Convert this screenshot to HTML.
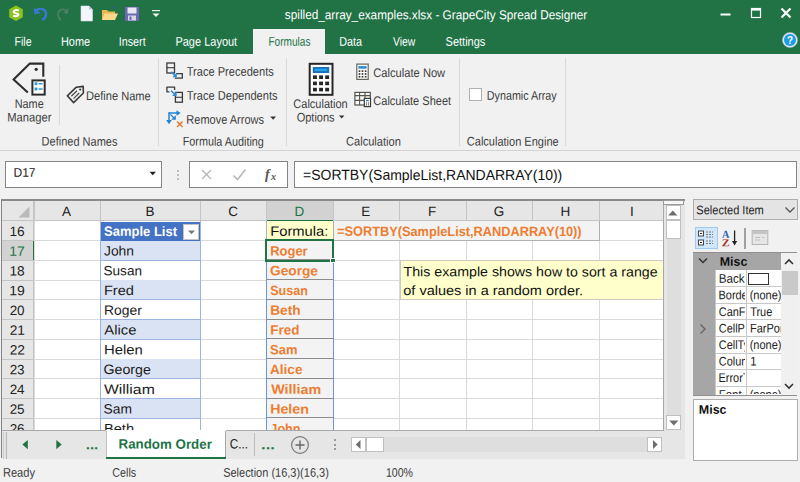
<!DOCTYPE html>
<html lang="en"><head><meta charset="utf-8"><title>GrapeCity Spread Designer</title>
<style>
html,body{margin:0;padding:0;}
body{width:800px;height:482px;overflow:hidden;position:relative;background:#f1f1f1;font-family:"Liberation Sans", sans-serif;}
#app{position:absolute;left:0;top:0;width:800px;height:482px;overflow:hidden;}
#app div,#app svg,#app span.t{position:absolute;}
#app div.c{overflow:hidden;}
span.t{left:0;top:0;white-space:pre;transform-origin:0 0;}
</style></head><body><div id="app">
<div style="left:0px;top:0px;width:800px;height:53.5px;background:#217346;"></div>
<div style="left:0px;top:0px;width:46px;height:54.3px;background:#217346;"></div>
<span class="t" style="font-size:13px;line-height:13px;color:#ffffff;transform:translate(284.85px,8.10px) rotate(0.05deg) scaleX(0.9060);">spilled_array_examples.xlsx - GrapeCity Spread Designer</span>
<svg style="left:715px;top:4px" width="80" height="20" viewBox="0 0 80 20">
<rect x="5.5" y="9.5" width="10" height="2" fill="#fff"/>
<rect x="36.5" y="4.5" width="9" height="9" fill="none" stroke="#fff" stroke-width="1.2"/>
<rect x="36" y="4" width="10" height="2.6" fill="#fff"/>
<path d="M66.5 4.5 L75.5 13.5 M75.5 4.5 L66.5 13.5" stroke="#fff" stroke-width="2.2" fill="none"/>
</svg>
<svg style="left:781px;top:31px" width="18" height="18" viewBox="0 0 18 18">
<circle cx="9" cy="9" r="7.6" fill="#dfe9f2" stroke="#9bb4c8" stroke-width="0.6"/>
<circle cx="9" cy="9" r="6" fill="#1e9be3"/>
<text x="9" y="12.6" font-size="10" font-weight="700" text-anchor="middle" fill="#fff" font-family="Liberation Sans, sans-serif">?</text>
</svg>
<svg style="left:7px;top:4px" width="160" height="20" viewBox="0 0 160 20">
<path d="M9 1.5 L15.8 5.3 L15.8 13.2 L9 17 L2.2 13.2 L2.2 5.3 Z" fill="#8cc21f"/>
<path d="M11.8 6.6 C10 5.6 6.6 6 6.6 8 C6.6 9.6 11.4 8.8 11.4 10.6 C11.4 12.4 7.6 12.6 6.2 11.6" fill="none" stroke="#fff" stroke-width="2"/>
<path d="M28 7 C33 3 39 5 39 10 C39 13 37 15 35 16" fill="none" stroke="#3a78d8" stroke-width="2.4"/>
<path d="M27 4 L27.5 10.5 L33.5 9 Z" fill="#3a78d8"/>
<path d="M60 7 C56 3.5 51 6 51 10 C51 13 52.5 15 54 16" fill="none" stroke="#4f7f68" stroke-width="1.6"/>
<path d="M61.5 4 L61 10 L56 8.5 Z" fill="#4f7f68"/>
<path d="M74 2 L82 2 L85.5 5.5 L85.5 17 L74 17 Z" fill="#f4f6fb" stroke="#d5dbea" stroke-width="0.6"/>
<path d="M82 2 L82 5.5 L85.5 5.5 Z" fill="#b9c4dc"/>
<path d="M95 6 L100 6 L101.5 7.5 L108 7.5 L108 16 L95 16 Z" fill="#e9b84f"/>
<path d="M95 16 L97.5 9.5 L111 9.5 L108 16 Z" fill="#fbd88a"/>
<path d="M105 3.5 C107 2.5 108.5 3.5 108.5 5.5" fill="none" stroke="#3b5b8c" stroke-width="1"/>
<rect x="118" y="3" width="14" height="14" fill="#6b67b5"/>
<rect x="120.5" y="3.5" width="9" height="6" fill="#e8e8ee"/>
<rect x="121" y="11.5" width="8" height="5" fill="#d9d9e4"/>
<rect x="122.5" y="12.5" width="2" height="3.5" fill="#6b67b5"/>
<rect x="145" y="6" width="8" height="1.2" fill="#e6efe9"/>
<path d="M145.5 9.5 L152.5 9.5 L149 13 Z" fill="#f2f7f4"/>
</svg>
<div style="left:253px;top:28.7px;width:72px;height:26px;background:#f1f1f1;"></div>
<span class="t" style="font-size:12.5px;line-height:12.5px;color:#ffffff;transform:translate(14.45px,35.70px) rotate(0.05deg) scaleX(0.8486);">File</span>
<span class="t" style="font-size:12.5px;line-height:12.5px;color:#ffffff;transform:translate(60.92px,35.70px) rotate(0.05deg) scaleX(0.8756);">Home</span>
<span class="t" style="font-size:12.5px;line-height:12.5px;color:#ffffff;transform:translate(118.83px,35.70px) rotate(0.05deg) scaleX(0.8567);">Insert</span>
<span class="t" style="font-size:12.5px;line-height:12.5px;color:#ffffff;transform:translate(175.42px,35.70px) rotate(0.05deg) scaleX(0.8797);">Page Layout</span>
<span class="t" style="font-size:12.5px;line-height:12.5px;color:#217346;transform:translate(268.39px,35.70px) rotate(0.05deg) scaleX(0.8079);">Formulas</span>
<span class="t" style="font-size:12.5px;line-height:12.5px;color:#ffffff;transform:translate(339.34px,35.70px) rotate(0.05deg) scaleX(0.8627);">Data</span>
<span class="t" style="font-size:12.5px;line-height:12.5px;color:#ffffff;transform:translate(392.99px,35.70px) rotate(0.05deg) scaleX(0.8302);">View</span>
<span class="t" style="font-size:12.5px;line-height:12.5px;color:#ffffff;transform:translate(445.54px,35.70px) rotate(0.05deg) scaleX(0.8818);">Settings</span>
<div style="left:0px;top:150px;width:800px;height:1px;background:#d4d4d4;"></div>
<div style="left:158px;top:58px;width:1px;height:88px;background:#d9d9d9;"></div>
<div style="left:286px;top:58px;width:1px;height:88px;background:#d9d9d9;"></div>
<div style="left:459px;top:58px;width:1px;height:88px;background:#d9d9d9;"></div>
<div style="left:565px;top:58px;width:1px;height:88px;background:#d9d9d9;"></div>
<div style="left:59px;top:65px;width:1px;height:60px;background:#d9d9d9;"></div>
<span class="t" style="font-size:12.5px;line-height:12.5px;color:#404040;transform:translate(14.73px,98.00px) rotate(0.05deg) scaleX(0.8693);">Name</span>
<span class="t" style="font-size:12.5px;line-height:12.5px;color:#404040;transform:translate(7.30px,111.50px) rotate(0.05deg) scaleX(0.8953);">Manager</span>
<span class="t" style="font-size:12.5px;line-height:12.5px;color:#404040;transform:translate(86.01px,90.10px) rotate(0.05deg) scaleX(0.8881);">Define Name</span>
<span class="t" style="font-size:12.5px;line-height:12.5px;color:#404040;transform:translate(41.62px,135.60px) rotate(0.05deg) scaleX(0.8802);">Defined Names</span>
<span class="t" style="font-size:12.5px;line-height:12.5px;color:#404040;transform:translate(186.68px,65.80px) rotate(0.05deg) scaleX(0.8872);">Trace Precedents</span>
<span class="t" style="font-size:12.5px;line-height:12.5px;color:#404040;transform:translate(186.68px,89.80px) rotate(0.05deg) scaleX(0.8875);">Trace Dependents</span>
<span class="t" style="font-size:12.5px;line-height:12.5px;color:#404040;transform:translate(186.32px,113.70px) rotate(0.05deg) scaleX(0.8807);">Remove Arrows</span>
<span class="t" style="font-size:12.5px;line-height:12.5px;color:#404040;transform:translate(182.73px,135.60px) rotate(0.05deg) scaleX(0.8652);">Formula Auditing</span>
<span class="t" style="font-size:12.5px;line-height:12.5px;color:#404040;transform:translate(293.34px,98.00px) rotate(0.05deg) scaleX(0.8797);">Calculation</span>
<span class="t" style="font-size:12.5px;line-height:12.5px;color:#404040;transform:translate(296.66px,111.50px) rotate(0.05deg) scaleX(0.8810);">Options</span>
<span class="t" style="font-size:12.5px;line-height:12.5px;color:#404040;transform:translate(373.33px,66.90px) rotate(0.05deg) scaleX(0.8915);">Calculate Now</span>
<span class="t" style="font-size:12.5px;line-height:12.5px;color:#404040;transform:translate(373.34px,94.90px) rotate(0.05deg) scaleX(0.8811);">Calculate Sheet</span>
<span class="t" style="font-size:12.5px;line-height:12.5px;color:#404040;transform:translate(346.04px,135.60px) rotate(0.05deg) scaleX(0.8863);">Calculation</span>
<span class="t" style="font-size:12.5px;line-height:12.5px;color:#404040;transform:translate(486.84px,89.70px) rotate(0.05deg) scaleX(0.8598);">Dynamic Array</span>
<span class="t" style="font-size:12.5px;line-height:12.5px;color:#404040;transform:translate(466.84px,135.60px) rotate(0.05deg) scaleX(0.8806);">Calculation Engine</span>
<svg style="left:269px;top:115px" width="9" height="6" viewBox="0 0 9 6"><path d="M1.2 1.6 L7 1.6 L4.1 4.7 Z" fill="#333"/></svg>
<svg style="left:338px;top:114px" width="9" height="6" viewBox="0 0 9 6"><path d="M1 1.6 L6.4 1.6 L3.7 4.6 Z" fill="#333"/></svg>
<svg style="left:10px;top:60px" width="40" height="40" viewBox="0 0 40 40">
<path d="M33.3 16.8 L33.3 3.6 L19.8 3.6 L3.6 19.4 L17.8 32.6" fill="none" stroke="#2d2d2d" stroke-width="2.1"/>
<circle cx="26.2" cy="9.3" r="1.6" fill="#2d2d2d"/>
<rect x="22.4" y="20.4" width="12.3" height="14.2" fill="#fff" stroke="#2d2d2d" stroke-width="2"/>
<rect x="24.6" y="22.3" width="2.8" height="2.8" fill="#2b95e0"/><rect x="28.6" y="23" width="4" height="1.5" fill="#2b95e0"/>
<rect x="24.6" y="27.6" width="2.8" height="2.8" fill="#2b95e0"/><rect x="28.6" y="28.3" width="4" height="1.5" fill="#2b95e0"/>
</svg>
<svg style="left:65px;top:84px" width="22" height="22" viewBox="0 0 22 22">
<path d="M2.3 11.8 L11.3 3.2 L18.2 2.4 L18.4 9 L8.6 18.6 Z" fill="none" stroke="#3a3a3a" stroke-width="1.6" stroke-linejoin="round"/>
<circle cx="15.2" cy="5.6" r="1.1" fill="#3a3a3a"/>
<path d="M6.3 12.3 L12 6.8 M8.5 14.6 L14.2 9" stroke="#4a4a4a" stroke-width="1.2"/>
</svg>
<svg style="left:165px;top:61px" width="20" height="20" viewBox="0 0 20 20">
<rect x="1.9" y="2" width="7.6" height="10" fill="none" stroke="#3a3a3a" stroke-width="1.3"/>
<path d="M1.9 6.7 L9.5 6.7" stroke="#3a3a3a" stroke-width="1.1"/>
<path d="M11 12.6 L17.3 12.6 L17.3 17.2 L9.8 17.2" fill="none" stroke="#3a3a3a" stroke-width="1.3"/>
<path d="M6.2 10.8 L10 14.6" stroke="#2e8bd6" stroke-width="1.5"/>
<path d="M11.8 11.8 L11.8 16.3 L7.3 16.3 Z" fill="#2e8bd6"/>
</svg>
<svg style="left:165px;top:85px" width="20" height="20" viewBox="0 0 20 20">
<path d="M9.6 5 L9.6 2.2 L1.9 2.2 L1.9 6.8 L4.4 6.8" fill="none" stroke="#3a3a3a" stroke-width="1.3" stroke-linejoin="round"/>
<rect x="10.4" y="7.4" width="7" height="9.8" fill="none" stroke="#3a3a3a" stroke-width="1.3"/>
<path d="M10.4 12.3 L17.4 12.3" stroke="#3a3a3a" stroke-width="1.1"/>
<path d="M6 5.6 L9.6 9.2" stroke="#2e8bd6" stroke-width="1.5"/>
<path d="M11.6 6.4 L11.6 11 L7 11 Z" fill="#2e8bd6"/>
</svg>
<svg style="left:165px;top:109px" width="20" height="20" viewBox="0 0 20 20">
<path d="M4 4 L12.5 4" stroke="#2483cf" stroke-width="1.5"/>
<path d="M11.5 1.2 L15.6 4 L11.5 6.8 Z" fill="#2483cf"/>
<path d="M4 3.3 L4 12" stroke="#2483cf" stroke-width="1.5"/>
<path d="M1.2 11 L4 15.3 L6.8 11 Z" fill="#2483cf"/>
<path d="M5.4 5.4 L9 9" stroke="#2483cf" stroke-width="1.3"/>
<path d="M10.8 6.2 L10.8 10.8 L6.2 10.8 Z" fill="#2483cf"/>
<path d="M12 12.5 L17.6 18 M17.6 12.5 L12 18" stroke="#e0742b" stroke-width="1.3"/>
</svg>
<svg style="left:306px;top:60px" width="30" height="38" viewBox="0 0 30 38">
<rect x="3.7" y="3.8" width="22.8" height="31" fill="#fff" stroke="#262626" stroke-width="2"/>
<rect x="6.8" y="7" width="16.4" height="6" fill="#1b6fb8"/>
<rect x="8.6" y="8.7" width="12.6" height="2.4" fill="#27a3ea"/>
<g fill="#262626">
<rect x="7" y="15.4" width="3.9" height="3.6"/><rect x="13.1" y="15.4" width="3.9" height="3.6"/><rect x="19.2" y="15.4" width="3.9" height="3.6"/>
<rect x="7" y="21.6" width="3.9" height="3.6"/><rect x="13.1" y="21.6" width="3.9" height="3.6"/><rect x="19.2" y="21.6" width="3.9" height="3.6"/>
<rect x="7" y="27.8" width="3.9" height="3.6"/><rect x="13.1" y="27.8" width="3.9" height="3.6"/><rect x="19.2" y="27.8" width="3.9" height="3.6"/>
</g>
</svg>
<svg style="left:354px;top:62px" width="18" height="20" viewBox="0 0 18 20">
<rect x="2.8" y="2.1" width="11.4" height="15.3" fill="#fdfdfd" stroke="#66665e" stroke-width="1.2"/>
<rect x="4.4" y="4.1" width="8.2" height="2.6" fill="#2e8bd6"/>
<g fill="#333">
<rect x="4.7" y="8.3" width="1.6" height="1.7"/><rect x="7.7" y="8.3" width="1.6" height="1.7"/><rect x="10.8" y="8.3" width="1.6" height="1.7"/>
<rect x="4.7" y="11.1" width="1.6" height="1.7"/><rect x="7.7" y="11.1" width="1.6" height="1.7"/><rect x="10.8" y="11.1" width="1.6" height="1.7"/>
<rect x="4.7" y="13.9" width="1.6" height="1.7"/><rect x="7.7" y="13.9" width="1.6" height="1.7"/><rect x="10.8" y="13.9" width="1.6" height="1.7"/>
</g>
</svg>
<svg style="left:353px;top:90px" width="20" height="20" viewBox="0 0 20 20">
<rect x="1.9" y="2.4" width="15.4" height="12.6" fill="#fbfbfb" stroke="#55554e" stroke-width="1.2"/>
<path d="M1.9 5.6 L17.3 5.6 M1.9 10.4 L11 10.4 M6.6 2.4 L6.6 15 M12 2.4 L12 8" stroke="#55554e" stroke-width="1.1"/>
<rect x="11.3" y="8.4" width="6.2" height="8.2" fill="#fff" stroke="#3a3a3a" stroke-width="1.2"/>
<rect x="13" y="10" width="2.8" height="1.3" fill="#2e8bd6"/>
<rect x="12.9" y="12.5" width="1.1" height="1.1" fill="#444"/><rect x="14.9" y="12.5" width="1.1" height="1.1" fill="#444"/>
<rect x="12.9" y="14.4" width="1.1" height="1.1" fill="#444"/><rect x="14.9" y="14.4" width="1.1" height="1.1" fill="#444"/>
</svg>
<div style="left:468.5px;top:87.5px;width:13.5px;height:13.2px;background:#ffffff;border:1px solid #b0b0b0;box-sizing:border-box;"></div>
<div style="left:5.3px;top:161px;width:157.2px;height:27.3px;background:#ffffff;border:1px solid #858585;box-sizing:border-box;"></div>
<span class="t" style="font-size:12.5px;line-height:12.5px;color:#222;transform:translate(13.44px,166.80px) rotate(0.05deg) scaleX(0.9647);">D17</span>
<svg style="left:148px;top:170px" width="10" height="7" viewBox="0 0 10 7"><path d="M1.5 1.8 L8 1.8 L4.75 5.2 Z" fill="#222"/></svg>
<div style="left:176.5px;top:170px;width:2px;height:2px;background:#bdbdbd;"></div>
<div style="left:176.5px;top:174px;width:2px;height:2px;background:#bdbdbd;"></div>
<div style="left:176.5px;top:178px;width:2px;height:2px;background:#bdbdbd;"></div>
<div style="left:189px;top:161px;width:99px;height:27.3px;background:#ffffff;border:1px solid #858585;box-sizing:border-box;"></div>
<svg style="left:199px;top:166px" width="90" height="18" viewBox="0 0 90 18">
<path d="M3 4 L12 13 M12 4 L3 13" stroke="#b8b8b8" stroke-width="1.4" fill="none"/>
<path d="M34.5 9.5 L38.5 13.5 L46.5 3.5" stroke="#b8b8b8" stroke-width="1.6" fill="none"/>
<text x="66" y="13" font-family="Liberation Serif, serif" font-style="italic" font-weight="700" font-size="14" fill="#555">f<tspan x="72" y="14" font-size="10">x</tspan></text>
</svg>
<div style="left:294px;top:161px;width:502.8px;height:27.3px;background:#ffffff;border:1px solid #858585;box-sizing:border-box;"></div>
<span class="t" style="font-size:14.5px;line-height:14.5px;color:#111;transform:translate(303.08px,167.80px) rotate(0.05deg) scaleX(0.9635);">=SORTBY(SampleList,RANDARRAY(10))</span>
<div style="left:0.5px;top:198.8px;width:663.5px;height:232.2px;background:#ffffff;"></div>
<div style="left:0.5px;top:198.8px;width:663.5px;height:22.099999999999994px;background:#e6e6e6;"></div>
<div style="left:0.5px;top:198.8px;width:33.5px;height:232.2px;background:#e6e6e6;"></div>
<div style="left:0.5px;top:198.8px;width:684.3px;height:2px;background:#8a8a8a;"></div>
<div style="left:0.5px;top:198.8px;width:1.5px;height:259.6px;background:#858585;"></div>
<div style="left:266.5px;top:200.8px;width:66.5px;height:20.099999999999994px;background:#d2d2d2;"></div>
<div style="left:2px;top:240.65px;width:31.5px;height:19.75px;background:#d2d2d2;"></div>
<div style="left:34px;top:220.4px;width:630px;height:1px;background:#d9d9d9;"></div>
<div style="left:2px;top:220.4px;width:32px;height:1px;background:#c4c4c4;"></div>
<div style="left:34px;top:240.15px;width:630px;height:1px;background:#d9d9d9;"></div>
<div style="left:2px;top:240.15px;width:32px;height:1px;background:#c4c4c4;"></div>
<div style="left:34px;top:259.9px;width:630px;height:1px;background:#d9d9d9;"></div>
<div style="left:2px;top:259.9px;width:32px;height:1px;background:#c4c4c4;"></div>
<div style="left:34px;top:279.65px;width:630px;height:1px;background:#d9d9d9;"></div>
<div style="left:2px;top:279.65px;width:32px;height:1px;background:#c4c4c4;"></div>
<div style="left:34px;top:299.4px;width:630px;height:1px;background:#d9d9d9;"></div>
<div style="left:2px;top:299.4px;width:32px;height:1px;background:#c4c4c4;"></div>
<div style="left:34px;top:319.15px;width:630px;height:1px;background:#d9d9d9;"></div>
<div style="left:2px;top:319.15px;width:32px;height:1px;background:#c4c4c4;"></div>
<div style="left:34px;top:338.9px;width:630px;height:1px;background:#d9d9d9;"></div>
<div style="left:2px;top:338.9px;width:32px;height:1px;background:#c4c4c4;"></div>
<div style="left:34px;top:358.65px;width:630px;height:1px;background:#d9d9d9;"></div>
<div style="left:2px;top:358.65px;width:32px;height:1px;background:#c4c4c4;"></div>
<div style="left:34px;top:378.4px;width:630px;height:1px;background:#d9d9d9;"></div>
<div style="left:2px;top:378.4px;width:32px;height:1px;background:#c4c4c4;"></div>
<div style="left:34px;top:398.15px;width:630px;height:1px;background:#d9d9d9;"></div>
<div style="left:2px;top:398.15px;width:32px;height:1px;background:#c4c4c4;"></div>
<div style="left:34px;top:417.9px;width:630px;height:1px;background:#d9d9d9;"></div>
<div style="left:2px;top:417.9px;width:32px;height:1px;background:#c4c4c4;"></div>
<div style="left:34px;top:437.65px;width:630px;height:1px;background:#d9d9d9;"></div>
<div style="left:2px;top:437.65px;width:32px;height:1px;background:#c4c4c4;"></div>
<div style="left:33.5px;top:220.9px;width:1px;height:210.1px;background:#d9d9d9;"></div>
<div style="left:33.5px;top:200.8px;width:1px;height:20.099999999999994px;background:#c4c4c4;"></div>
<div style="left:100.0px;top:220.9px;width:1px;height:210.1px;background:#d9d9d9;"></div>
<div style="left:100.0px;top:200.8px;width:1px;height:20.099999999999994px;background:#c4c4c4;"></div>
<div style="left:199.8px;top:220.9px;width:1px;height:210.1px;background:#d9d9d9;"></div>
<div style="left:199.8px;top:200.8px;width:1px;height:20.099999999999994px;background:#c4c4c4;"></div>
<div style="left:266.0px;top:220.9px;width:1px;height:210.1px;background:#d9d9d9;"></div>
<div style="left:266.0px;top:200.8px;width:1px;height:20.099999999999994px;background:#c4c4c4;"></div>
<div style="left:332.5px;top:220.9px;width:1px;height:210.1px;background:#d9d9d9;"></div>
<div style="left:332.5px;top:200.8px;width:1px;height:20.099999999999994px;background:#c4c4c4;"></div>
<div style="left:399.0px;top:220.9px;width:1px;height:210.1px;background:#d9d9d9;"></div>
<div style="left:399.0px;top:200.8px;width:1px;height:20.099999999999994px;background:#c4c4c4;"></div>
<div style="left:465.5px;top:220.9px;width:1px;height:210.1px;background:#d9d9d9;"></div>
<div style="left:465.5px;top:200.8px;width:1px;height:20.099999999999994px;background:#c4c4c4;"></div>
<div style="left:532.0px;top:220.9px;width:1px;height:210.1px;background:#d9d9d9;"></div>
<div style="left:532.0px;top:200.8px;width:1px;height:20.099999999999994px;background:#c4c4c4;"></div>
<div style="left:598.5px;top:220.9px;width:1px;height:210.1px;background:#d9d9d9;"></div>
<div style="left:598.5px;top:200.8px;width:1px;height:20.099999999999994px;background:#c4c4c4;"></div>
<div style="left:665.0px;top:220.9px;width:1px;height:210.1px;background:#d9d9d9;"></div>
<div style="left:665.0px;top:200.8px;width:1px;height:20.099999999999994px;background:#c4c4c4;"></div>
<div style="left:33.2px;top:200.8px;width:1px;height:230.2px;background:#c4c4c4;"></div>
<div style="left:34px;top:220.20000000000002px;width:630px;height:1.2px;background:#c4c4c4;"></div>
<svg style="left:17px;top:205px" width="14" height="14" viewBox="0 0 14 14"><path d="M12.5 1.5 L12.5 12.5 L1.5 12.5 Z" fill="#b9b9b9"/></svg>
<span class="t" style="font-size:13.5px;line-height:13.5px;color:#222;transform:translate(61.95px,204.90px) rotate(0.05deg) scaleX(1.0000);">A</span>
<span class="t" style="font-size:13.5px;line-height:13.5px;color:#222;transform:translate(145.47px,204.90px) rotate(0.05deg) scaleX(1.0000);">B</span>
<span class="t" style="font-size:13.5px;line-height:13.5px;color:#222;transform:translate(228.22px,204.90px) rotate(0.05deg) scaleX(1.0000);">C</span>
<span class="t" style="font-size:13.5px;line-height:13.5px;color:#217346;transform:translate(294.45px,204.90px) rotate(0.05deg) scaleX(1.0000);">D</span>
<span class="t" style="font-size:13.5px;line-height:13.5px;color:#222;transform:translate(361.20px,204.90px) rotate(0.05deg) scaleX(1.0000);">E</span>
<span class="t" style="font-size:13.5px;line-height:13.5px;color:#222;transform:translate(428.07px,204.90px) rotate(0.05deg) scaleX(1.0000);">F</span>
<span class="t" style="font-size:13.5px;line-height:13.5px;color:#222;transform:translate(493.82px,204.90px) rotate(0.05deg) scaleX(1.0000);">G</span>
<span class="t" style="font-size:13.5px;line-height:13.5px;color:#222;transform:translate(560.58px,204.90px) rotate(0.05deg) scaleX(1.0000);">H</span>
<span class="t" style="font-size:13.5px;line-height:13.5px;color:#222;transform:translate(630.08px,204.90px) rotate(0.05deg) scaleX(1.0000);">I</span>
<span class="t" style="font-size:13.5px;line-height:13.5px;color:#222;transform:translate(9.39px,224.90px) rotate(0.05deg) scaleX(1.0148);">16</span>
<span class="t" style="font-size:13.5px;line-height:13.5px;color:#217346;transform:translate(9.37px,244.65px) rotate(0.05deg) scaleX(1.0340);">17</span>
<span class="t" style="font-size:13.5px;line-height:13.5px;color:#222;transform:translate(9.39px,264.40px) rotate(0.05deg) scaleX(1.0148);">18</span>
<span class="t" style="font-size:13.5px;line-height:13.5px;color:#222;transform:translate(9.37px,284.15px) rotate(0.05deg) scaleX(1.0340);">19</span>
<span class="t" style="font-size:13.5px;line-height:13.5px;color:#222;transform:translate(9.65px,303.90px) rotate(0.05deg) scaleX(0.9964);">20</span>
<span class="t" style="font-size:13.5px;line-height:13.5px;color:#222;transform:translate(9.64px,323.65px) rotate(0.05deg) scaleX(1.0148);">21</span>
<span class="t" style="font-size:13.5px;line-height:13.5px;color:#222;transform:translate(9.64px,343.40px) rotate(0.05deg) scaleX(1.0148);">22</span>
<span class="t" style="font-size:13.5px;line-height:13.5px;color:#222;transform:translate(9.65px,363.15px) rotate(0.05deg) scaleX(0.9964);">23</span>
<span class="t" style="font-size:13.5px;line-height:13.5px;color:#222;transform:translate(9.65px,382.90px) rotate(0.05deg) scaleX(0.9964);">24</span>
<span class="t" style="font-size:13.5px;line-height:13.5px;color:#222;transform:translate(9.65px,402.65px) rotate(0.05deg) scaleX(0.9964);">25</span>
<span class="t" style="font-size:13.5px;line-height:13.5px;color:#222;transform:translate(9.65px,422.40px) rotate(0.05deg) scaleX(0.9964);">26</span>
<div style="left:32.5px;top:240.65px;width:1.6px;height:19.75px;background:#217346;"></div>
<div style="left:266.5px;top:219.6px;width:66.5px;height:1.6px;background:#217346;"></div>
<div style="left:100.5px;top:221.5px;width:99.80000000000001px;height:19.15px;background:#4472c4;"></div>
<span class="t" style="font-size:13.5px;line-height:13.5px;color:#ffffff;font-weight:700;transform:translate(104.12px,224.85px) rotate(0.05deg) scaleX(0.9613);">Sample List</span>
<div style="left:183.3px;top:223.7px;width:16px;height:16px;background:#ffffff;border:1px solid #c4c4c4;box-sizing:border-box;"></div>
<svg style="left:185.8px;top:227.6px" width="11" height="9" viewBox="0 0 11 9"><path d="M2 2.5 L9 2.5 L5.5 6.3 Z" fill="#7a7a7a"/></svg>
<div style="left:100.5px;top:240.65px;width:99.80000000000001px;height:19.75px;background:#dae3f3;"></div>
<div style="left:100.5px;top:259.79999999999995px;width:99.80000000000001px;height:1.1px;background:#9cb5e0;"></div>
<span class="t" style="font-size:13.5px;line-height:13.5px;color:#1a1a1a;transform:translate(104.04px,244.60px) rotate(0.05deg) scaleX(1.0230);">John</span>
<div style="left:100.5px;top:279.54999999999995px;width:99.80000000000001px;height:1.1px;background:#9cb5e0;"></div>
<span class="t" style="font-size:13.5px;line-height:13.5px;color:#1a1a1a;transform:translate(103.55px,264.35px) rotate(0.05deg) scaleX(1.0041);">Susan</span>
<div style="left:100.5px;top:280.15px;width:99.80000000000001px;height:19.75px;background:#dae3f3;"></div>
<div style="left:100.5px;top:299.29999999999995px;width:99.80000000000001px;height:1.1px;background:#9cb5e0;"></div>
<span class="t" style="font-size:13.5px;line-height:13.5px;color:#1a1a1a;transform:translate(103.92px,284.10px) rotate(0.05deg) scaleX(1.0796);">Fred</span>
<div style="left:100.5px;top:319.04999999999995px;width:99.80000000000001px;height:1.1px;background:#9cb5e0;"></div>
<span class="t" style="font-size:13.5px;line-height:13.5px;color:#1a1a1a;transform:translate(103.97px,303.85px) rotate(0.05deg) scaleX(1.0282);">Roger</span>
<div style="left:100.5px;top:319.65px;width:99.80000000000001px;height:19.75px;background:#dae3f3;"></div>
<div style="left:100.5px;top:338.79999999999995px;width:99.80000000000001px;height:1.1px;background:#9cb5e0;"></div>
<span class="t" style="font-size:13.5px;line-height:13.5px;color:#1a1a1a;transform:translate(104.30px,323.60px) rotate(0.05deg) scaleX(1.0957);">Alice</span>
<div style="left:100.5px;top:358.54999999999995px;width:99.80000000000001px;height:1.1px;background:#9cb5e0;"></div>
<span class="t" style="font-size:13.5px;line-height:13.5px;color:#1a1a1a;transform:translate(103.90px,343.35px) rotate(0.05deg) scaleX(1.1015);">Helen</span>
<div style="left:100.5px;top:359.15px;width:99.80000000000001px;height:19.75px;background:#dae3f3;"></div>
<div style="left:100.5px;top:378.29999999999995px;width:99.80000000000001px;height:1.1px;background:#9cb5e0;"></div>
<span class="t" style="font-size:13.5px;line-height:13.5px;color:#1a1a1a;transform:translate(103.51px,363.10px) rotate(0.05deg) scaleX(1.0514);">George</span>
<div style="left:100.5px;top:398.04999999999995px;width:99.80000000000001px;height:1.1px;background:#9cb5e0;"></div>
<span class="t" style="font-size:13.5px;line-height:13.5px;color:#1a1a1a;transform:translate(104.01px,382.85px) rotate(0.05deg) scaleX(1.1669);">William</span>
<div style="left:100.5px;top:398.65px;width:99.80000000000001px;height:19.75px;background:#dae3f3;"></div>
<div style="left:100.5px;top:417.79999999999995px;width:99.80000000000001px;height:1.1px;background:#9cb5e0;"></div>
<span class="t" style="font-size:13.5px;line-height:13.5px;color:#1a1a1a;transform:translate(103.53px,402.60px) rotate(0.05deg) scaleX(1.0231);">Sam</span>
<div style="left:100.5px;top:437.54999999999995px;width:99.80000000000001px;height:1.1px;background:#9cb5e0;"></div>
<span class="t" style="font-size:13.5px;line-height:13.5px;color:#1a1a1a;transform:translate(103.92px,422.35px) rotate(0.05deg) scaleX(1.0846);">Beth</span>
<div style="left:100.0px;top:220.9px;width:1.2px;height:210.1px;background:#9cb5e0;"></div>
<div style="left:199.60000000000002px;top:220.9px;width:1.2px;height:210.1px;background:#9cb5e0;"></div>
<div style="left:266.5px;top:220.9px;width:66.5px;height:19.75px;background:#ffffcc;"></div>
<div style="left:333px;top:221.4px;width:266px;height:18.75px;background:#f3f3f3;"></div>
<div style="left:266.5px;top:239.85px;width:332.5px;height:1.2px;background:#b0b0b0;"></div>
<div style="left:266.0px;top:220.9px;width:1px;height:19.75px;background:#b0b0b0;"></div>
<div style="left:332.5px;top:220.9px;width:1px;height:19.75px;background:#b0b0b0;"></div>
<div style="left:598.5px;top:220.9px;width:1px;height:19.75px;background:#b0b0b0;"></div>
<span class="t" style="font-size:13.5px;line-height:13.5px;color:#111;transform:translate(270.21px,224.80px) rotate(0.05deg) scaleX(1.0922);">Formula:</span>
<span class="t" style="font-size:13.5px;line-height:13.5px;color:#ed7d31;font-weight:700;transform:translate(337.03px,224.85px) rotate(0.05deg) scaleX(0.9456);">=SORTBY(SampleList,RANDARRAY(10))</span>
<div style="left:266.5px;top:240.65px;width:66.5px;height:190.35px;background:#f3f3f3;"></div>
<div style="left:266.5px;top:259px;width:66.5px;height:1px;background:#8c8c8c;"></div>
<span class="t" style="font-size:13.5px;line-height:13.5px;color:#ed7d31;font-weight:700;transform:translate(270.24px,244.60px) rotate(0.05deg) scaleX(0.9589);">Roger</span>
<div style="left:266.5px;top:279px;width:66.5px;height:1px;background:#8c8c8c;"></div>
<span class="t" style="font-size:13.5px;line-height:13.5px;color:#ed7d31;font-weight:700;transform:translate(270.09px,264.35px) rotate(0.05deg) scaleX(1.0119);">George</span>
<div style="left:266.5px;top:299px;width:66.5px;height:1px;background:#8c8c8c;"></div>
<span class="t" style="font-size:13.5px;line-height:13.5px;color:#ed7d31;font-weight:700;transform:translate(270.14px,284.10px) rotate(0.05deg) scaleX(0.9299);">Susan</span>
<div style="left:266.5px;top:319px;width:66.5px;height:1px;background:#8c8c8c;"></div>
<span class="t" style="font-size:13.5px;line-height:13.5px;color:#ed7d31;font-weight:700;transform:translate(270.19px,303.85px) rotate(0.05deg) scaleX(1.0124);">Beth</span>
<div style="left:266.5px;top:338px;width:66.5px;height:1px;background:#8c8c8c;"></div>
<span class="t" style="font-size:13.5px;line-height:13.5px;color:#ed7d31;font-weight:700;transform:translate(270.20px,323.60px) rotate(0.05deg) scaleX(0.9982);">Fred</span>
<div style="left:266.5px;top:358px;width:66.5px;height:1px;background:#8c8c8c;"></div>
<span class="t" style="font-size:13.5px;line-height:13.5px;color:#ed7d31;font-weight:700;transform:translate(270.12px,343.35px) rotate(0.05deg) scaleX(0.9578);">Sam</span>
<div style="left:266.5px;top:378px;width:66.5px;height:1px;background:#8c8c8c;"></div>
<span class="t" style="font-size:13.5px;line-height:13.5px;color:#ed7d31;font-weight:700;transform:translate(270.10px,363.10px) rotate(0.05deg) scaleX(1.0016);">Alice</span>
<div style="left:266.5px;top:398px;width:66.5px;height:1px;background:#8c8c8c;"></div>
<span class="t" style="font-size:13.5px;line-height:13.5px;color:#ed7d31;font-weight:700;transform:translate(271.20px,382.85px) rotate(0.05deg) scaleX(1.0595);">William</span>
<div style="left:266.5px;top:417px;width:66.5px;height:1px;background:#8c8c8c;"></div>
<span class="t" style="font-size:13.5px;line-height:13.5px;color:#ed7d31;font-weight:700;transform:translate(270.15px,402.60px) rotate(0.05deg) scaleX(1.0543);">Helen</span>
<div style="left:266.5px;top:437px;width:66.5px;height:1px;background:#8c8c8c;"></div>
<span class="t" style="font-size:13.5px;line-height:13.5px;color:#ed7d31;font-weight:700;transform:translate(270.37px,422.35px) rotate(0.05deg) scaleX(0.9344);">John</span>
<div style="left:266.0px;top:240.65px;width:1px;height:190.35px;background:#6f93d6;"></div>
<div style="left:332.5px;top:240.65px;width:1px;height:190.35px;background:#6f93d6;"></div>
<div style="left:265.3px;top:239.05px;width:69.1px;height:22.55px;border:2px solid #217346;box-sizing:border-box;"></div>
<div style="left:330px;top:257.79999999999995px;width:5.6px;height:5.2px;background:#217346;border:1px solid #fff;box-sizing:border-box;"></div>
<div style="left:399.5px;top:260.3px;width:264px;height:39.3px;background:#ffffcc;border:1px solid #c9c9c9;box-sizing:border-box;"></div>
<span class="t" style="font-size:13.5px;line-height:13.5px;color:#111;transform:translate(403.54px,265.25px) rotate(0.05deg) scaleX(1.0517);">This example shows how to sort a range</span>
<span class="t" style="font-size:13.5px;line-height:13.5px;color:#111;transform:translate(403.26px,284.00px) rotate(0.05deg) scaleX(1.0743);">of values in a random order.</span>
<div style="left:663px;top:200.8px;width:22px;height:258px;background:#e6e6e6;"></div>
<div style="left:663px;top:200.8px;width:1px;height:230px;background:#a8a8a8;"></div>
<div style="left:666.5px;top:220px;width:14.3px;height:196px;background:#dedede;"></div>
<div style="left:662.8px;top:200.3px;width:21.5px;height:4.6px;background:#f6f6f6;border:1px solid #9a9a9a;box-sizing:border-box;"></div>
<div style="left:666.3px;top:205.4px;width:14.6px;height:14.8px;background:#ffffff;border:1px solid #c0c0c0;box-sizing:border-box;"></div>
<svg style="left:667.4px;top:208.1px" width="12" height="10" viewBox="0 0 12 10"><path d="M1.2 7.4 L10.4 7.4 L5.8 2.6 Z" fill="#6e6e6e"/></svg>
<div style="left:666.3px;top:220.2px;width:14.6px;height:19px;background:#ffffff;border:1px solid #c0c0c0;box-sizing:border-box;"></div>
<div style="left:666.3px;top:415.2px;width:14.6px;height:14.6px;background:#ffffff;border:1px solid #c0c0c0;box-sizing:border-box;"></div>
<svg style="left:667.6px;top:418px" width="12" height="10" viewBox="0 0 12 10"><path d="M1.2 2.6 L10.4 2.6 L5.8 7.4 Z" fill="#6e6e6e"/></svg>
<div style="left:2px;top:431px;width:662px;height:27.5px;background:#e6e6e6;"></div>
<div style="left:2px;top:430.2px;width:662px;height:1.3px;background:#a8a8a8;"></div>
<div style="left:2px;top:431.5px;width:4.5px;height:27px;background:#e4e4e4;"></div>
<div style="left:3.2px;top:431.5px;width:1px;height:27px;background:#cfcfcf;"></div>
<div style="left:6px;top:431.5px;width:1px;height:27px;background:#b4b4b4;"></div>
<svg style="left:20px;top:436px" width="44" height="16" viewBox="0 0 44 16">
<path d="M7.8 4 L7.8 13.2 L2.4 8.6 Z" fill="#217346"/>
<path d="M36.3 4 L36.3 13.2 L41.7 8.6 Z" fill="#217346"/>
</svg>
<span class="t" style="font-size:13.5px;line-height:13.5px;color:#217346;font-weight:700;transform:translate(85.68px,438.30px) rotate(0.05deg) scaleX(1.1243);">...</span>
<div style="left:106px;top:429.5px;width:119.5px;height:29px;background:#ffffff;"></div>
<div style="left:106px;top:431px;width:1px;height:27px;background:#c0c0c0;"></div>
<div style="left:225px;top:431px;width:1px;height:27px;background:#a8a8a8;"></div>
<div style="left:106px;top:456.6px;width:119.5px;height:2px;background:#217346;"></div>
<span class="t" style="font-size:13.5px;line-height:13.5px;color:#217346;font-weight:700;transform:translate(118.51px,437.60px) rotate(0.05deg) scaleX(0.9877);">Random Order</span>
<span class="t" style="font-size:13.5px;line-height:13.5px;color:#222;transform:translate(229.85px,437.60px) rotate(0.05deg) scaleX(0.8684);">C...</span>
<div style="left:253.5px;top:433px;width:1px;height:23px;background:#bdbdbd;"></div>
<span class="t" style="font-size:13.5px;line-height:13.5px;color:#217346;font-weight:700;transform:translate(261.08px,438.30px) rotate(0.05deg) scaleX(1.2216);">...</span>
<svg style="left:290px;top:435px" width="20" height="20" viewBox="0 0 20 20">
<circle cx="10" cy="10" r="8.4" fill="none" stroke="#7a7a7a" stroke-width="1.2"/>
<path d="M5.5 10 L14.5 10 M10 5.5 L10 14.5" stroke="#666" stroke-width="1.4"/>
</svg>
<div style="left:333.5px;top:439px;width:2px;height:2px;background:#9a9a9a;"></div>
<div style="left:333.5px;top:443.5px;width:2px;height:2px;background:#9a9a9a;"></div>
<div style="left:333.5px;top:448px;width:2px;height:2px;background:#9a9a9a;"></div>
<div style="left:350px;top:431.5px;width:314px;height:27.5px;background:#e6e6e6;"></div>
<div style="left:366px;top:437px;width:282px;height:14.6px;background:#dedede;"></div>
<div style="left:350.5px;top:437px;width:15px;height:14.6px;background:#ffffff;border:1px solid #c0c0c0;box-sizing:border-box;"></div>
<svg style="left:353px;top:439px" width="11" height="11" viewBox="0 0 11 11"><path d="M7.5 1 L7.5 10 L2.8 5.5 Z" fill="#6e6e6e"/></svg>
<div style="left:365.5px;top:437px;width:18.3px;height:14.6px;background:#ffffff;border:1px solid #c0c0c0;box-sizing:border-box;"></div>
<div style="left:647.3px;top:437px;width:15.2px;height:14.6px;background:#ffffff;border:1px solid #c0c0c0;box-sizing:border-box;"></div>
<svg style="left:650px;top:439px" width="11" height="11" viewBox="0 0 11 11"><path d="M3 1 L3 10 L7.7 5.5 Z" fill="#6e6e6e"/></svg>
<span class="t" style="font-size:12.5px;line-height:12.5px;color:#404040;transform:translate(2.91px,466.75px) rotate(0.05deg) scaleX(0.8886);">Ready</span>
<span class="t" style="font-size:12.5px;line-height:12.5px;color:#404040;transform:translate(112.35px,466.75px) rotate(0.05deg) scaleX(0.8604);">Cells</span>
<span class="t" style="font-size:12.5px;line-height:12.5px;color:#404040;transform:translate(223.14px,466.75px) rotate(0.05deg) scaleX(0.8792);">Selection (16,3)(16,3)</span>
<span class="t" style="font-size:12.5px;line-height:12.5px;color:#404040;transform:translate(385.95px,466.75px) rotate(0.05deg) scaleX(0.8459);">100%</span>
<div style="left:692.6px;top:198.7px;width:105.4px;height:21.8px;background:#e4e4e4;border:1px solid #adadad;box-sizing:border-box;"></div>
<span class="t" style="font-size:12.5px;line-height:12.5px;color:#222;transform:translate(696.34px,204.30px) rotate(0.05deg) scaleX(0.8829);">Selected Item</span>
<svg style="left:784px;top:205px" width="12" height="10" viewBox="0 0 12 10"><path d="M1.5 2.5 L6 7 L10.5 2.5" fill="none" stroke="#555" stroke-width="1.3"/></svg>
<div style="left:695px;top:227px;width:23px;height:22px;background:#cfe6fb;border:1px solid #9fcaf0;box-sizing:border-box;"></div>
<svg style="left:697px;top:229px" width="20" height="18" viewBox="0 0 20 18">
<rect x="1.5" y="2" width="5" height="5" fill="#fff" stroke="#444" stroke-width="1"/><rect x="3" y="4" width="2" height="1" fill="#222"/>
<rect x="1.5" y="11" width="5" height="5" fill="#fff" stroke="#444" stroke-width="1"/><rect x="3" y="13" width="2" height="1" fill="#222"/>
<path d="M9 3 L16 3 M9 5.5 L16 5.5 M9 8 L16 8 M9 12 L16 12 M9 14.5 L16 14.5" stroke="#777" stroke-width="1" stroke-dasharray="2 1"/>
</svg>
<span class="t" style="font-size:10.5px;line-height:10.5px;color:#2a5db0;font-weight:700;font-family:'Liberation Serif', serif;transform:translate(722.00px,229.70px) rotate(0.05deg) scaleX(0.9733);">A</span>
<span class="t" style="font-size:10.5px;line-height:10.5px;color:#a0321f;font-weight:700;font-family:'Liberation Serif', serif;transform:translate(721.74px,238.30px) rotate(0.05deg) scaleX(1.1167);">Z</span>
<svg style="left:730px;top:227.5px" width="10" height="20" viewBox="0 0 10 20"><path d="M4.6 2.5 L4.6 15" stroke="#222" stroke-width="1.3"/><path d="M2 13 L7.2 13 L4.6 17.5 Z" fill="#222"/></svg>
<div style="left:744px;top:227.7px;width:1.5px;height:21.8px;background:#a0a0a0;"></div>
<svg style="left:751px;top:229px" width="18" height="18" viewBox="0 0 18 18">
<rect x="1.2" y="1.5" width="15.6" height="14" fill="#e6e6e6" stroke="#b4b4b4" stroke-width="1"/>
<rect x="1.2" y="1.5" width="15.6" height="3.4" fill="#c4c4c4"/>
<path d="M4 8.5 L9 8.5 M4 11 L9 11 M11 8.5 L13.5 8.5" stroke="#c0c0c0" stroke-width="1"/>
</svg>
<div style="left:693px;top:252px;width:104px;height:143.5px;background:#a6a6a6;"></div>
<div style="left:693px;top:252px;width:104px;height:1px;background:#8f8f8f;"></div>
<svg style="left:696px;top:255px" width="14" height="12" viewBox="0 0 14 12"><path d="M3 3.5 L7 7.5 L11 3.5" fill="none" stroke="#333" stroke-width="1.5"/></svg>
<span class="t" style="font-size:12.5px;line-height:12.5px;color:#111;font-weight:700;transform:translate(719.76px,255.70px) rotate(0.05deg) scaleX(0.9925);">Misc</span>
<div style="left:715px;top:270.3px;width:66px;height:125.19999999999999px;background:#ffffff;"></div>
<div style="left:715px;top:286.35px;width:66px;height:1px;background:#c8c8c8;"></div>
<div style="left:715px;top:302.90000000000003px;width:66px;height:1px;background:#c8c8c8;"></div>
<div style="left:715px;top:319.45000000000005px;width:66px;height:1px;background:#c8c8c8;"></div>
<div style="left:715px;top:336.00000000000006px;width:66px;height:1px;background:#c8c8c8;"></div>
<div style="left:715px;top:352.55px;width:66px;height:1px;background:#c8c8c8;"></div>
<div style="left:715px;top:369.1px;width:66px;height:1px;background:#c8c8c8;"></div>
<div style="left:715px;top:385.65000000000003px;width:66px;height:1px;background:#c8c8c8;"></div>
<div style="left:715px;top:402.20000000000005px;width:66px;height:1px;background:#c8c8c8;"></div>
<div style="left:745.5px;top:270.3px;width:1px;height:125.19999999999999px;background:#c8c8c8;"></div>
<div style="left:715px;top:270.3px;width:1px;height:125.19999999999999px;background:#c8c8c8;"></div>
<div class="c" style="left:716px;top:270.3px;width:29.2px;height:124.2px">
<span class="t" style="font-size:12.5px;line-height:12.5px;color:#222;transform:translate(2.67px,2.80px) rotate(0.05deg) scaleX(0.9350);">BackColor</span>
<span class="t" style="font-size:12.5px;line-height:12.5px;color:#222;transform:translate(2.52px,19.35px) rotate(0.05deg) scaleX(0.8750);">Border</span>
<span class="t" style="font-size:12.5px;line-height:12.5px;color:#222;transform:translate(2.74px,35.90px) rotate(0.05deg) scaleX(0.8750);">CanFocus</span>
<span class="t" style="font-size:12.5px;line-height:12.5px;color:#222;transform:translate(2.74px,52.45px) rotate(0.05deg) scaleX(0.8750);">CellPadding</span>
<span class="t" style="font-size:12.5px;line-height:12.5px;color:#222;transform:translate(2.74px,69.00px) rotate(0.05deg) scaleX(0.8750);">CellType</span>
<span class="t" style="font-size:12.5px;line-height:12.5px;color:#222;transform:translate(2.74px,85.55px) rotate(0.05deg) scaleX(0.8750);">ColumnSpan</span>
<span class="t" style="font-size:12.5px;line-height:12.5px;color:#222;transform:translate(2.52px,102.10px) rotate(0.05deg) scaleX(0.8750);">ErrorText</span>
<span class="t" style="font-size:12.5px;line-height:12.5px;color:#222;transform:translate(2.68px,118.65px) rotate(0.05deg) scaleX(0.9167);">Font</span>
</div>
<div class="c" style="left:746.5px;top:270.3px;width:34.3px;height:124.2px">
<span class="t" style="font-size:12.5px;line-height:12.5px;color:#222;transform:translate(2.64px,19.35px) rotate(0.05deg) scaleX(0.8812);">(none)</span>
<span class="t" style="font-size:12.5px;line-height:12.5px;color:#222;transform:translate(3.18px,35.90px) rotate(0.05deg) scaleX(0.8776);">True</span>
<span class="t" style="font-size:12.5px;line-height:12.5px;color:#222;transform:translate(2.91px,52.45px) rotate(0.05deg) scaleX(0.8850);">FarPoint.Win</span>
<span class="t" style="font-size:12.5px;line-height:12.5px;color:#222;transform:translate(2.64px,69.00px) rotate(0.05deg) scaleX(0.8812);">(none)</span>
<span class="t" style="font-size:12.5px;line-height:12.5px;color:#222;transform:translate(3.20px,85.55px) rotate(0.05deg) scaleX(0.9000);">1</span>
<span class="t" style="font-size:12.5px;line-height:12.5px;color:#222;transform:translate(2.64px,118.65px) rotate(0.05deg) scaleX(0.8812);">(none)</span>
</div>
<div style="left:748px;top:272.5px;width:21px;height:12px;background:#ffffff;border:1px solid #333;box-sizing:border-box;"></div>
<svg style="left:697px;top:322px" width="12" height="14" viewBox="0 0 12 14"><path d="M3.5 2.5 L8 7 L3.5 11.5" fill="none" stroke="#666" stroke-width="1.4"/></svg>
<div style="left:781px;top:253px;width:17px;height:143px;background:#f0f0f0;"></div>
<div style="left:781px;top:253px;width:16px;height:18px;background:#f0f0f0;"></div>
<svg style="left:782px;top:256px" width="14" height="12" viewBox="0 0 14 12"><path d="M3 8 L7 4 L11 8" fill="none" stroke="#333" stroke-width="1.6"/></svg>
<div style="left:782px;top:270.8px;width:15.5px;height:24px;background:#c9c9c9;"></div>
<div style="left:781px;top:377px;width:16px;height:19px;background:#f0f0f0;"></div>
<svg style="left:782px;top:380px" width="14" height="12" viewBox="0 0 14 12"><path d="M3 4 L7 8 L11 4" fill="none" stroke="#333" stroke-width="1.6"/></svg>
<div style="left:692px;top:395.5px;width:107px;height:6px;background:#f1f1f1;"></div>
<div style="left:693px;top:394.5px;width:104px;height:1px;background:#8f8f8f;"></div>
<div style="left:692.5px;top:399px;width:105px;height:61.5px;background:#ffffff;border:1px solid #adadad;box-sizing:border-box;"></div>
<span class="t" style="font-size:12.5px;line-height:12.5px;color:#111;font-weight:700;transform:translate(698.75px,403.75px) rotate(0.05deg) scaleX(1.0000);">Misc</span>
</div></body></html>
